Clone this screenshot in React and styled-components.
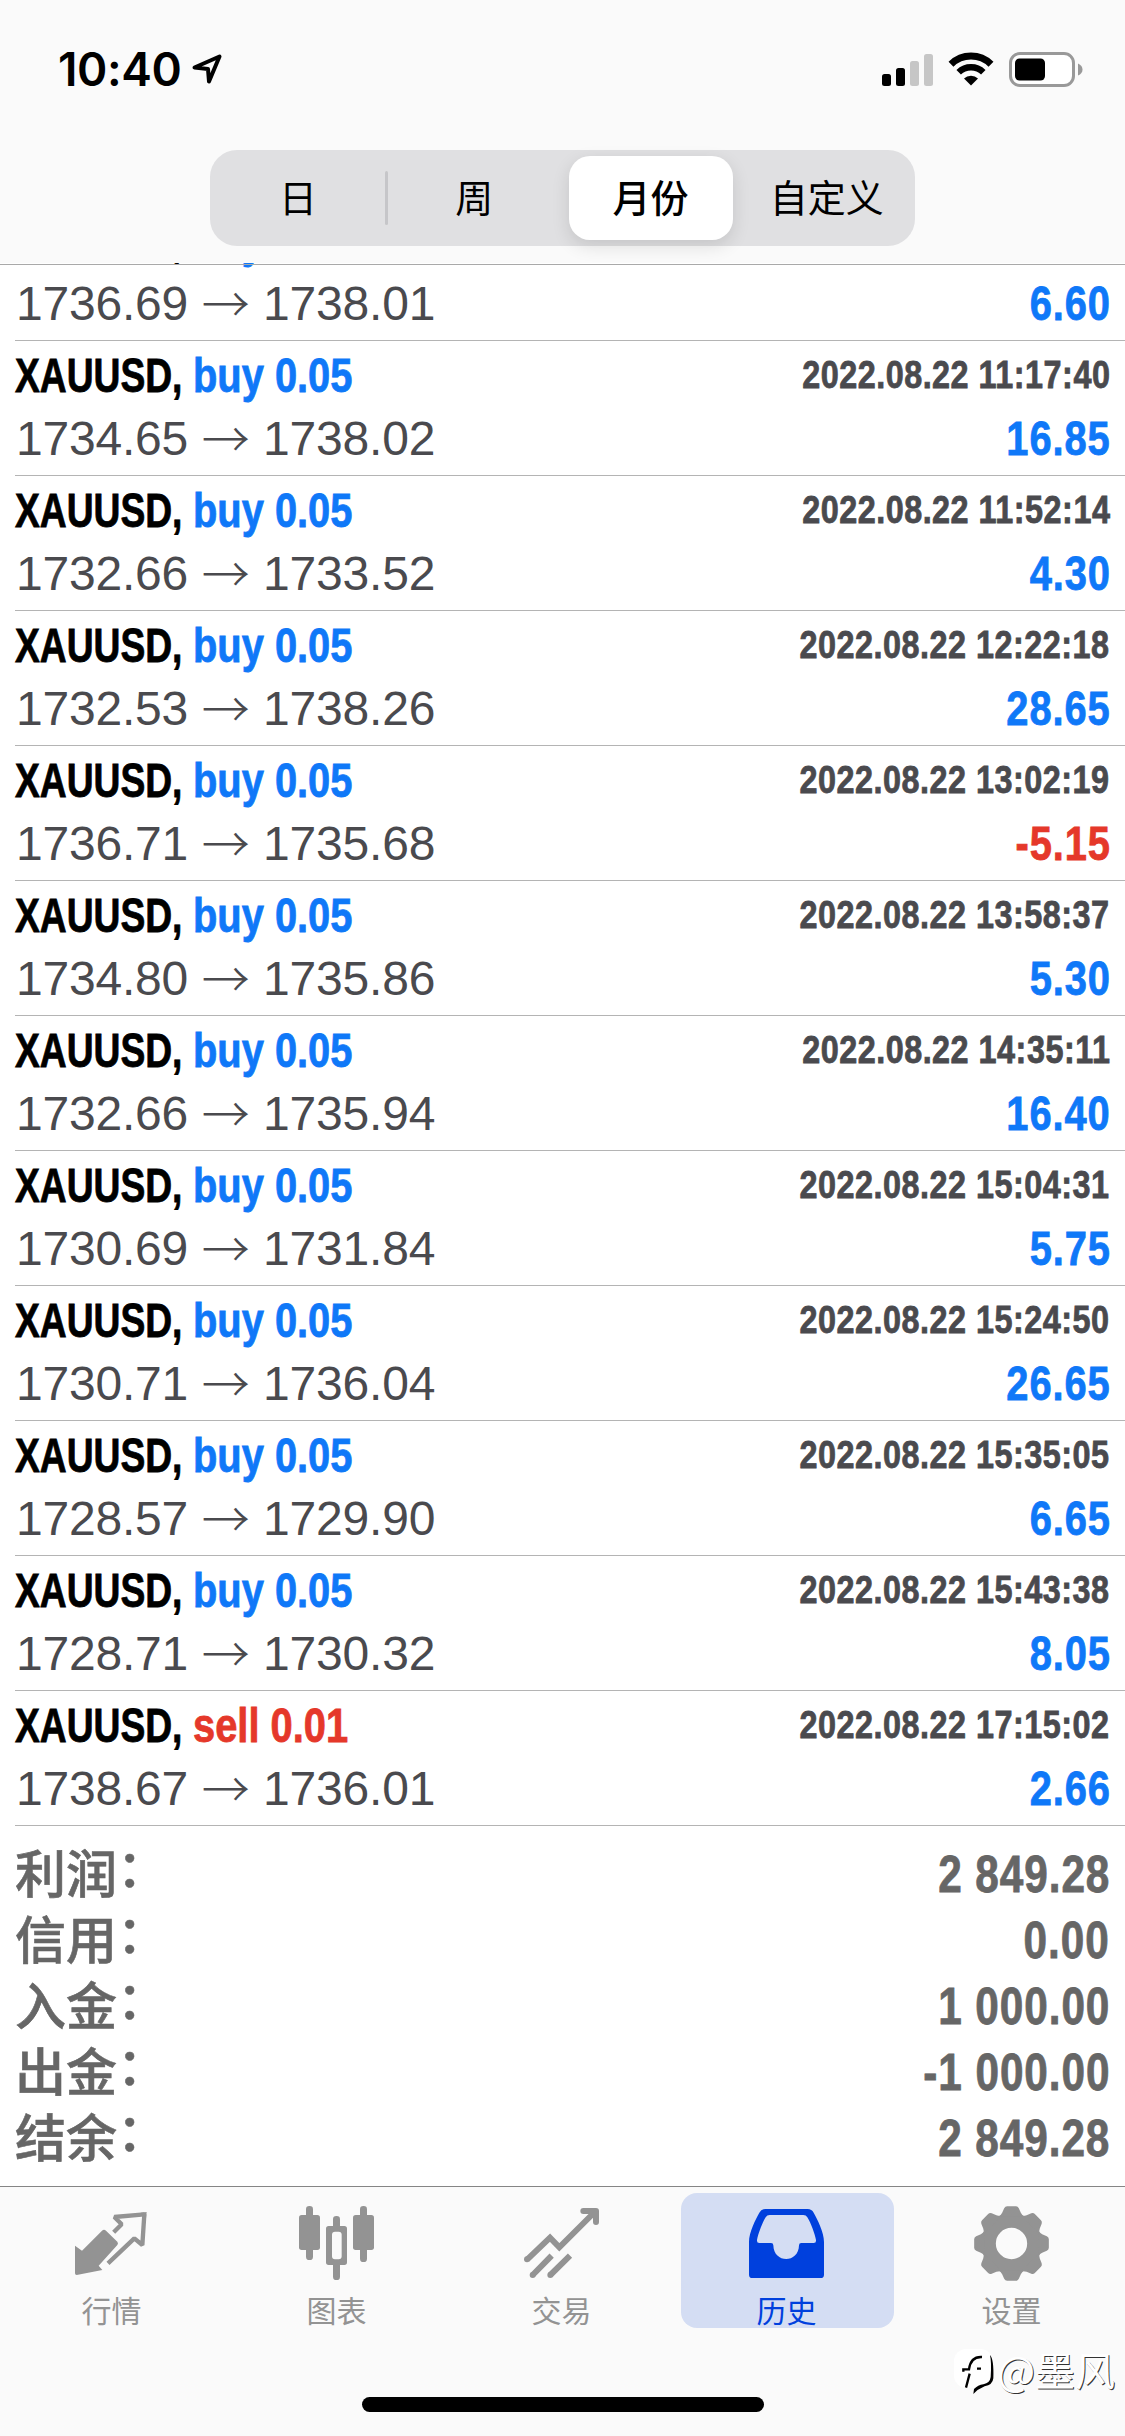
import React from "react";
import styled, { createGlobalStyle } from "styled-components";

const GlobalStyle = createGlobalStyle`
  * {
    box-sizing: border-box;
  }
  body {
    margin: 0;
    background-color: #ffffff;
  }
`;

const BLUE = "#0f78f8";
const RED = "#e5382a";

const Page = styled.div`
  width: 1125px;
  height: 2436px;
  display: flex;
  flex-direction: column;
  overflow: hidden;
  background-color: #ffffff;
  font-family: "Liberation Sans", "Noto Sans CJK SC", sans-serif;
`;
const Header = styled.div`
  height: 263px;
  flex-shrink: 0;
  background-color: #fafafa;
`;
const StatusBar = styled.div`
  height: 150px;
  padding: 45px 42px 57px 58px;
  display: flex;
  align-items: center;
  justify-content: space-between;
`;
const StatusLeft = styled.div`
  display: flex;
  align-items: center;
  gap: 10px;
`;
const Time = styled.div`
  font-family: Inter, sans-serif;
  font-size: 46px;
  line-height: 48px;
  font-weight: 600;
  letter-spacing: -0.4px;
  color: #000000;
`;
const StatusRight = styled.div`
  display: flex;
  align-items: center;
  gap: 15px;
`;
const Segments = styled.div`
  width: 705px;
  height: 96px;
  margin: 0 auto;
  border-radius: 27px;
  background-color: #e0e0e2;
  display: flex;
`;
const Segment = styled.div`
  flex: 1;
  margin: 6px;
  padding-bottom: 5px;
  display: flex;
  align-items: center;
  justify-content: center;
  border-radius: 21px;
  font-family: "Noto Sans CJK SC", sans-serif;
  font-size: 38px;
  line-height: 48px;
  font-weight: ${(props) => (props.$active ? 500 : 400)};
  color: #000000;
  background-color: ${(props) => (props.$active ? "#ffffff" : "transparent")};
  box-shadow: ${(props) =>
    props.$active ? "0 6px 18px rgba(0, 0, 0, 0.12)" : "none"};
`;
const SegmentLine = styled.div`
  width: 3px;
  height: 54px;
  margin: 21px -1.5px;
  border-radius: 2px;
  background-color: #c6c6c9;
`;
const DealList = styled.div`
  position: relative;
  height: 1563px;
  flex-shrink: 0;
  display: flex;
  flex-direction: column;
  justify-content: flex-end;
  overflow: hidden;
`;
const HeaderLine = styled.div`
  position: absolute;
  top: 1px;
  left: 0;
  right: 0;
  height: 1px;
  background-color: #a9a9a9;
`;
const Deal = styled.div`
  height: 135px;
  flex-shrink: 0;
  margin-left: 15px;
  padding: 4px 15px 0 0;
  border-bottom: 1px solid #b4b4b4;
`;
const DealRow = styled.div`
  display: flex;
  justify-content: space-between;
  height: ${(props) => props.$h};
  line-height: ${(props) => props.$h};
  white-space: pre;
`;
const Title = styled.div`
  display: flex;
`;
const Condensed = styled.div`
  font-weight: bold;
  font-size: 48px;
  transform: scaleX(0.83);
  transform-origin: right center;
  -webkit-text-stroke: 0.8px currentColor;
`;
const Symbol = styled(Condensed)`
  margin-right: -51px;
  transform: scaleX(0.775);
  transform-origin: left center;
  color: #000000;
`;
const Side = styled(Condensed)`
  transform-origin: left center;
  color: ${(props) => props.color};
`;
const DealTime = styled(Condensed)`
  margin-top: -1px;
  font-size: 39px;
  letter-spacing: 0.6px;
  color: #4a4a4e;
`;
const Prices = styled.div`
  padding-left: 1px;
  display: flex;
  font-size: 48px;
  letter-spacing: -0.2px;
  color: #4a4a4e;
`;
const Arrow = styled.span`
  width: 75px;
  margin-top: -2px;
  text-align: center;
  font-family: "Noto Sans CJK SC", sans-serif;
  font-weight: 300;
`;
const Profit = styled(Condensed)`
  margin-right: -1px;
  letter-spacing: 1.1px;
  color: ${(props) => props.color};
`;
const Summary = styled.div`
  height: 360px;
  flex-shrink: 0;
  padding: 14px 15px 0;
`;
const SummaryRow = styled.div`
  display: flex;
  justify-content: space-between;
  height: 66px;
  line-height: 66px;
  color: #666666;
`;
const SummaryLabel = styled.div`
  margin-top: -2px;
  font-family: "Noto Sans CJK SC", sans-serif;
  font-size: 51px;
  font-weight: 500;
  -webkit-text-stroke: 0.6px currentColor;
`;
const Colon = styled.span`
  display: inline-block;
  transform: translateY(-6px);
`;
const SummaryValue = styled(Condensed)`
  margin-top: 2px;
  font-size: 51px;
  letter-spacing: 1.1px;
`;
const TabBar = styled.div`
  position: relative;
  height: 250px;
  flex-shrink: 0;
  border-top: 1px solid #858585;
  background-color: #fafafa;
  display: flex;
  flex-direction: column;
  align-items: center;
`;
const Tabs = styled.div`
  width: 100%;
  padding-top: 6px;
  display: flex;
`;
const Tab = styled.div`
  flex: 1;
  height: 135px;
  margin: 0 6px;
  padding: 13px 2px 0 0;
  display: flex;
  flex-direction: column;
  align-items: center;
  border-radius: 16px;
  color: ${(props) => (props.$active ? "#0040dd" : "#939393")};
  background-color: ${(props) => (props.$active ? "#d4ddf3" : "transparent")};
`;
const TabLabel = styled.div`
  margin-top: 13px;
  font-family: "Noto Sans CJK SC", sans-serif;
  font-size: 30px;
  line-height: 30px;
`;
const HomeIndicator = styled.div`
  width: 402px;
  height: 15px;
  margin-top: 69px;
  border-radius: 8px;
  background-color: #000000;
`;
const Watermark = styled.div`
  position: absolute;
  right: 10px;
  top: 161px;
  display: flex;
  align-items: center;
  gap: 3px;
`;
const WatermarkText = styled.div`
  margin-top: -5px;
  font-family: "Noto Sans CJK SC", sans-serif;
  font-size: 40px;
  line-height: 52px;
  color: #ffffff;
  text-shadow: 1px 1px 0 #333333;
`;

const deals = [
  ["buy 0.05", "", "1736.69", "1738.01", "6.60"],
  ["buy 0.05", "2022.08.22 11:17:40", "1734.65", "1738.02", "16.85"],
  ["buy 0.05", "2022.08.22 11:52:14", "1732.66", "1733.52", "4.30"],
  ["buy 0.05", "2022.08.22 12:22:18", "1732.53", "1738.26", "28.65"],
  ["buy 0.05", "2022.08.22 13:02:19", "1736.71", "1735.68", "-5.15"],
  ["buy 0.05", "2022.08.22 13:58:37", "1734.80", "1735.86", "5.30"],
  ["buy 0.05", "2022.08.22 14:35:11", "1732.66", "1735.94", "16.40"],
  ["buy 0.05", "2022.08.22 15:04:31", "1730.69", "1731.84", "5.75"],
  ["buy 0.05", "2022.08.22 15:24:50", "1730.71", "1736.04", "26.65"],
  ["buy 0.05", "2022.08.22 15:35:05", "1728.57", "1729.90", "6.65"],
  ["buy 0.05", "2022.08.22 15:43:38", "1728.71", "1730.32", "8.05"],
  ["sell 0.01", "2022.08.22 17:15:02", "1738.67", "1736.01", "2.66"],
];

const summary = [
  ["利润", "2 849.28"],
  ["信用", "0.00"],
  ["入金", "1 000.00"],
  ["出金", "-1 000.00"],
  ["结余", "2 849.28"],
];

const LocationIcon = () => (
  <svg width="32" height="32" viewBox="0 0 32 32" fill="none">
    <path
      d="M3.5 14.5 28.5 3.5 18 28.5 17 16Z"
      stroke="#000"
      strokeWidth="4"
      strokeLinejoin="round"
    />
  </svg>
);

const SignalIcon = () => (
  <svg width="51" height="33" viewBox="0 0 51 33">
    <rect x="0" y="21" width="9" height="12" rx="2.5" />
    <rect x="14" y="15" width="9" height="18" rx="2.5" />
    <rect x="28" y="8" width="9" height="25" rx="2.5" fill="#c6c6c6" />
    <rect x="42" y="1" width="9" height="32" rx="2.5" fill="#c6c6c6" />
  </svg>
);

const WifiIcon = () => (
  <svg width="46" height="34" viewBox="0 0 46 34" fill="none">
    <path d="M3 12.2A28.5 28.5 0 0 1 43 12.2" stroke="#000" strokeWidth="7" />
    <path d="M10.7 20.3A17.6 17.6 0 0 1 35.3 20.3" stroke="#000" strokeWidth="6.4" />
    <path d="M16 26.5A10 10 0 0 1 30 26.5L23 33.5Z" fill="#000" />
  </svg>
);

const BatteryIcon = () => (
  <svg width="74" height="35" viewBox="0 0 74 35">
    <rect x="1.5" y="1.5" width="63" height="32" rx="9.5" fill="#fff" stroke="#999" strokeWidth="3" />
    <rect x="6" y="6.5" width="30" height="22" rx="4.5" />
    <path d="M69 11.5Q73.5 13.5 73.5 17.5T69 23.5Z" fill="#999" />
  </svg>
);

const QuotesIcon = () => (
  <svg width="75" height="75" viewBox="0 0 225 225">
    <path
      d="M84 74Q90 69 96 74L130 107Q134 112 130 117L74 179 85 192 8 207Q3 207 3 202V119L24 134Z"
      fill="currentColor"
    />
    <path
      d="M119 79 143 55 121 33 211 25 205 117 181 97 102 172"
      fill="none"
      stroke="currentColor"
      strokeWidth="13"
      strokeLinejoin="bevel"
    />
    <path d="M200 20 218 18 216 36Z" fill="currentColor" />
  </svg>
);

const ChartIcon = () => (
  <svg width="75" height="75" viewBox="0 0 225 225" fill="currentColor">
    <rect x="21" y="0" width="21" height="162" rx="10" />
    <rect x="0" y="27" width="63" height="105" rx="8" />
    <rect x="102" y="30" width="21" height="45" rx="10" />
    <rect x="102" y="165" width="21" height="57" rx="10" />
    <path
      fillRule="evenodd"
      d="M89 60H136Q144 60 144 68V169Q144 177 136 177H89Q81 177 81 169V68Q81 60 89 60ZM108 77Q99 77 99 86V151Q99 160 108 160H119Q128 160 128 151V86Q128 77 119 77Z"
    />
    <rect x="183" y="0" width="21" height="168" rx="10" />
    <rect x="162" y="27" width="63" height="105" rx="8" />
  </svg>
);

const TradeIcon = () => (
  <svg
    width="75"
    height="75"
    viewBox="0 0 225 225"
    fill="none"
    stroke="currentColor"
    strokeWidth="18"
  >
    <path d="M10 160 78 95 106 124 212 18" />
    <path d="M178 15H216V48" strokeLinejoin="round" strokeLinecap="round" />
    <path d="M26 207 83 149M79 207 138 149" />
    <g fill="currentColor" stroke="none">
      <circle cx="9" cy="160" r="9" />
      <circle cx="26" cy="207" r="9" />
      <circle cx="79" cy="207" r="9" />
    </g>
  </svg>
);

const HistoryIcon = () => (
  <svg width="75" height="75" viewBox="0 0 225 225">
    <path
      fillRule="evenodd"
      fill="currentColor"
      d="M0 206V108C0 78 20 40 31 20Q37 9 49 9H176Q188 9 194 20C205 40 225 78 225 108V206Q225 216 215 216H10Q0 216 0 206ZM62 27Q54 27 50 34C40 50 28 82 24 102Q23 111 31 111H66Q73 111 73 118C74 173 149 173 150 118Q150 111 157 111H194Q202 111 201 102C197 82 185 50 175 34Q171 27 163 27Z"
    />
  </svg>
);

const toothAngles = [0, 45, 90, 135, 180, 225, 270, 315];

const SettingsIcon = () => (
  <svg width="75" height="75" viewBox="-112.5 -112.5 225 225" fill="currentColor">
    <circle r="68.5" fill="none" stroke="currentColor" strokeWidth="43" />
    {toothAngles.map((a) => (
      <path
        key={a}
        transform={`rotate(${a})`}
        d="M-38 -80Q-31 -86 -28 -92L-22 -106Q-19 -112 -13 -112H13Q19 -112 22 -106L28 -92Q31 -86 38 -80Z"
      />
    ))}
  </svg>
);

const WatermarkIcon = () => (
  <svg width="40" height="45" viewBox="0 0 120 135" fill="none">
    <rect width="116" height="116" rx="36" fill="#fff" />
    <path d="M36 116 47 74M28 68V61H45Q50 22 84 24M69 59H81" stroke="#000" strokeWidth="7" />
    <path
      d="M108 18Q120 30 118 88 116 108 92 112 72 120 58 135L60 120Q72 108 88 106 108 102 110 84 113 40 108 18Z"
      fill="#000"
    />
  </svg>
);

const tabs = [
  { label: "行情", Icon: QuotesIcon },
  { label: "图表", Icon: ChartIcon },
  { label: "交易", Icon: TradeIcon },
  { label: "历史", Icon: HistoryIcon, active: true },
  { label: "设置", Icon: SettingsIcon },
];

function App() {
  return (
    <Page>
      <GlobalStyle />
      <Header>
        <StatusBar>
          <StatusLeft>
            <Time>10:40</Time>
            <LocationIcon />
          </StatusLeft>
          <StatusRight>
            <SignalIcon />
            <WifiIcon />
            <BatteryIcon />
          </StatusRight>
        </StatusBar>
        <Segments>
          <Segment>日</Segment>
          <SegmentLine />
          <Segment>周</Segment>
          <Segment $active>月份</Segment>
          <Segment>自定义</Segment>
        </Segments>
      </Header>
      <DealList>
        {deals.map(([side, time, open, close, profit]) => (
          <Deal key={open + close}>
            <DealRow $h="61px">
              <Title>
                <Symbol>XAUUSD, </Symbol>
                <Side color={side.startsWith("sell") ? RED : BLUE}>{side}</Side>
              </Title>
              {time && <DealTime>{time}</DealTime>}
            </DealRow>
            <DealRow $h="65px">
              <Prices>
                {open}
                <Arrow>→</Arrow>
                {close}
              </Prices>
              <Profit color={profit.startsWith("-") ? RED : BLUE}>{profit}</Profit>
            </DealRow>
          </Deal>
        ))}
        <HeaderLine />
      </DealList>
      <Summary>
        {summary.map(([label, value]) => (
          <SummaryRow key={label}>
            <SummaryLabel>
              {label}
              <Colon>：</Colon>
            </SummaryLabel>
            <SummaryValue>{value}</SummaryValue>
          </SummaryRow>
        ))}
      </Summary>
      <TabBar>
        <Tabs>
          {tabs.map(({ label, Icon, active }) => (
            <Tab key={label} $active={active}>
              <Icon />
              <TabLabel>{label}</TabLabel>
            </Tab>
          ))}
        </Tabs>
        <HomeIndicator />
        <Watermark>
          <WatermarkIcon />
          <WatermarkText>@墨风</WatermarkText>
        </Watermark>
      </TabBar>
    </Page>
  );
}

export default App;
